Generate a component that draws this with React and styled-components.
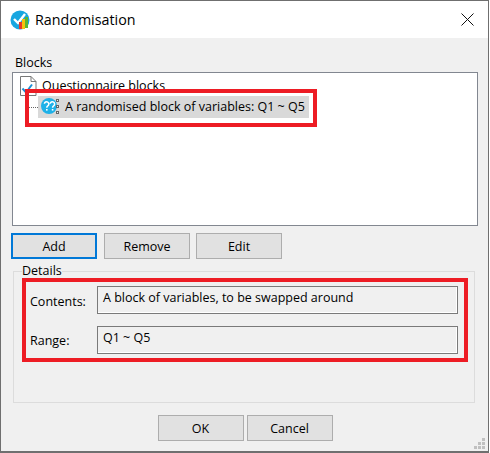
import React from "react";
import styled, { createGlobalStyle } from "styled-components";

const Global = createGlobalStyle`
  html, body { margin: 0; padding: 0; background: #fff; }
  * { box-sizing: border-box; }
`;
const Win = styled.div`
  position: relative;
  width: 489px; height: 453px;
  border: 1px solid #6f6f6f; border-width: 1px 1px 2px 1px;
  background: #f0f0f0; color: #000;
  font-family: "Open Sans", "Noto Sans", sans-serif; font-size: 12.5px;
  display: flex; flex-direction: column;
`;
const TitleBar = styled.div`
  height: 37px; background: #fff; display: flex; align-items: center; padding: 0 14px 0 9px; flex: none;
`;
const Title = styled.div`
  margin-left: 5px; font-size: 14.3px; flex: 1;
`;
const Body = styled.div`
  flex: 1; display: flex; flex-direction: column; padding: 16px 10px 0 11px;
`;
const SectionLabel = styled.div`
  height: 18px; line-height: 17px; padding-left: 3px;
`;
const Tree = styled.div`
  position: relative; width: 466px; height: 154px; background: #fff;
  border: 1px solid #828790; padding: 2px 0 0 5px;
`;
const RootRow = styled.div`
  height: 21px; display: flex; align-items: center; gap: 5px; padding-left: 1px;
`;
const ChildRow = styled.div`
  display: flex; align-items: center; margin-left: 9px; height: 22px;
`;
const Dots = styled.span`
  width: 11px; border-top: 1px dotted #666; flex: none;
`;
const Selected = styled.div`
  width: 271px; height: 22px; background: #d9d9d9; display: flex; align-items: center; padding: 0 0 1px 3px; gap: 5px;
`;
const Annotation = styled.div`
  position: absolute; left: 12px; top: 16px; width: 292px; height: 38px; border: 4px solid #ed1c24;
`;
const Buttons = styled.div`
  display: flex; gap: ${p => p.$gap}px; justify-content: ${p => p.$center ? "center" : "flex-start"};
  margin-top: ${p => p.$top}px; margin-left: ${p => p.$center ? 0 : -1}px;
`;
const Btn = styled.button`
  width: 86px; height: 26px; padding: 0; font: inherit; color: #000; background: #e1e1e1;
  border: ${p => p.$primary ? "2px solid #0078d7" : "1px solid #adadad"}; outline: none;
  margin-right: ${p => p.$primary ? 1 : 0}px;
`;
const Details = styled.fieldset`
  margin: 5px 0 0 1px; padding: 0 0 0 8px; width: 462px; height: 139px; min-width: 0;
  border: 1px solid #dcdcdc;
`;
const Legend = styled.legend`
  padding: 0; margin: 0; line-height: 14px; height: 14px;
`;
const RedBox = styled.div`
  width: 446px; height: 84px; border: 4px solid #ed1c24; padding: 4px 6px 4px 4px;
  display: flex; flex-direction: column; gap: 12px;
`;
const Row = styled.div`
  display: flex; align-items: center; height: 28px;
`;
const Label = styled.div`width: 67px; padding-top: ${p => p.$nudge}px;`;
const Field = styled.div`
  flex: 1; height: 28px; background: #f0f0f0; padding: 1px 0 0 5px; line-height: 20px;
  border: 1px solid #7a7a7a; box-shadow: inset -1px -1px 0 #fff;
`;
const Grip = styled.svg`
  position: absolute; right: 2px; bottom: 1px;
`;

const AppIcon = () => (
  <svg width="20" height="20" viewBox="0 0 20 20">
    <circle cx="10" cy="10" r="9.5" fill="#18a6e0" />
    <path d="M4 9l4 4 7-9" stroke="#fff" strokeWidth="2.4" fill="none" />
    <rect x="9" y="12" width="3" height="7" fill="#e6392c" />
    <rect x="12" y="9" width="3" height="10" fill="#f4c20d" />
    <rect x="15" y="7" width="3" height="11" fill="#5cb531" />
  </svg>
);
const DocIcon = () => (
  <svg width="18" height="22" viewBox="0 0 18 22">
    <path d="M1.5 1.5H12L17 6.5V20.5H1.5Z" fill="#fff" stroke="#777" />
    <path d="M12 1.5V6.5H17" fill="none" stroke="#777" />
    <path d="M3.5 13.5L7 17.5L13 9.5" fill="none" stroke="#1e8fd5" strokeWidth="2" />
  </svg>
);
const BlockIcon = () => (
  <svg width="19" height="19" viewBox="0 0 19 19">
    <circle cx="8" cy="9" r="8" fill="#1eb1e8" />
    <path d="M3.4 6.8a2.2 2.2 0 1 1 3.4 2c-.8.5-1 1-1 2M9.2 6.8a2.2 2.2 0 1 1 3.4 2c-.8.5-1 1-1 2" fill="none" stroke="#fff" strokeWidth="1.5" />
    <rect x="5" y="12" width="1.6" height="1.6" fill="#fff" />
    <rect x="10.8" y="12" width="1.6" height="1.6" fill="#fff" />
    <g fill="#eee" stroke="#666" strokeWidth="1">
      <rect x="15.5" y="2.5" width="2" height="2" />
      <rect x="15.5" y="8.5" width="2" height="2" />
      <rect x="15.5" y="14.5" width="2" height="2" />
    </g>
  </svg>
);
const CloseIcon = () => (
  <svg width="13" height="13" viewBox="0 0 13 13">
    <path d="M.5.5l12 12M12.5.5l-12 12" stroke="#111" strokeWidth="1" />
  </svg>
);

export default function App() {
  return (
    <>
      <Global />
      <Win>
        <TitleBar>
          <AppIcon />
          <Title>Randomisation</Title>
          <CloseIcon />
        </TitleBar>
        <Body>
          <SectionLabel>Blocks</SectionLabel>
          <Tree>
            <RootRow><DocIcon /><span>Questionnaire blocks</span></RootRow>
            <ChildRow>
              <Dots />
              <Selected><BlockIcon /><span>A randomised block of variables: Q1 ~ Q5</span></Selected>
            </ChildRow>
            <Annotation />
          </Tree>
          <Buttons $gap={6} $top={7}>
            <Btn $primary>Add</Btn>
            <Btn>Remove</Btn>
            <Btn>Edit</Btn>
          </Buttons>
          <Details>
            <Legend>Details</Legend>
            <RedBox>
              <Row><Label $nudge={2}>Contents:</Label><Field>A block of variables, to be swapped around</Field></Row>
              <Row><Label $nudge={0}>Range:</Label><Field>Q1 ~ Q5</Field></Row>
            </RedBox>
          </Details>
          <Buttons $gap={3} $top={12} $center>
            <Btn>OK</Btn>
            <Btn>Cancel</Btn>
          </Buttons>
        </Body>
        <Grip width="12" height="12" viewBox="0 0 12 12" fill="#c0c0c0">
          <rect x="8" y="0" width="3" height="3" /><rect x="4" y="4" width="3" height="3" /><rect x="8" y="4" width="3" height="3" />
          <rect x="0" y="8" width="3" height="3" /><rect x="4" y="8" width="3" height="3" /><rect x="8" y="8" width="3" height="3" />
        </Grip>
      </Win>
    </>
  );
}
